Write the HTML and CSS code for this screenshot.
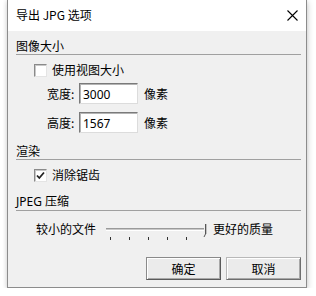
FILE: index.html
```html
<!DOCTYPE html>
<html lang="zh-CN">
<head>
  <meta charset="UTF-8">
  <title>导出 JPG 选项</title>
  <link rel="stylesheet" href="styles.css">
</head>
<body>
  <div class="window">
    <!-- Title bar -->
    <div class="titlebar">
      <span class="title">导出 JPG 选项</span>
      <svg class="close" width="11" height="11" viewBox="0 0 11 11">
        <path d="M0.5 0.5 L10.5 10.5 M10.5 0.5 L0.5 10.5" stroke="#000" stroke-width="1.1" fill="none"/>
      </svg>
    </div>

    <div class="content">
      <!-- Image size -->
      <div class="group-title first">图像大小</div>
      <div class="check-row">
        <span class="checkbox"></span>
        <span class="check-label">使用视图大小</span>
      </div>
      <div class="field-row">
        <span class="field-label">宽度:</span>
        <input class="field" type="text" value="3000">
        <span class="unit">像素</span>
      </div>
      <div class="field-row second">
        <span class="field-label">高度:</span>
        <input class="field" type="text" value="1567">
        <span class="unit">像素</span>
      </div>

      <!-- Rendering -->
      <div class="group-title render">渲染</div>
      <div class="check-row">
        <span class="checkbox">
          <svg width="11" height="11" viewBox="0 0 11 11">
            <path d="M2 5.5 L4.3 8 L9 2.5" stroke="#222" stroke-width="1.8" fill="none"/>
          </svg>
        </span>
        <span class="check-label">消除锯齿</span>
      </div>

      <!-- JPEG compression -->
      <div class="group-title jpeg">JPEG 压缩</div>
      <div class="slider-row">
        <span class="slider-label">较小的文件</span>
        <svg class="slider" width="108" height="22" viewBox="0 0 108 22">
          <line x1="2" y1="9.5" x2="100" y2="9.5" stroke="#9a9a9a" stroke-width="1"/>
          <line x1="2" y1="10.5" x2="100" y2="10.5" stroke="#c8c8c8" stroke-width="1"/>
          <line x1="2" y1="11.5" x2="100" y2="11.5" stroke="#ffffff" stroke-width="1"/>
          <path d="M101.5 5 L101.5 15 L100 18" stroke="#555" stroke-width="1" fill="none"/>
          <path d="M102.5 5 L102.5 15" stroke="#c0c0c0" stroke-width="1" fill="none"/>
          <g stroke="#333" stroke-width="1">
            <line x1="6.5" y1="18" x2="6.5" y2="21"/>
            <line x1="25.5" y1="18" x2="25.5" y2="21"/>
            <line x1="44.5" y1="18" x2="44.5" y2="21"/>
            <line x1="63.5" y1="18" x2="63.5" y2="21"/>
            <line x1="82.5" y1="18" x2="82.5" y2="21"/>
          </g>
        </svg>
        <span class="slider-label">更好的质量</span>
      </div>

      <!-- Buttons -->
      <div class="buttons">
        <button class="btn default">确定</button>
        <button class="btn">取消</button>
      </div>
    </div>
  </div>
</body>
</html>
```

FILE: styles.css
```css
body {
  margin: 0;
  padding: 0;
  background: #ffffff;
  font-family: "Noto Sans CJK SC", "Noto Sans", sans-serif;
  font-size: 12px;
  color: #000;
}

.window {
  margin-left: 7px;
  width: 298px;
  border: 1px solid #8c8c8c;
  border-top: none;
  background: #f0f0f0;
  box-shadow: 1px 2px 6px rgba(0, 0, 0, 0.18), -1px 0 4px rgba(0, 0, 0, 0.08);
}

.titlebar {
  height: 31px;
  background: #ffffff;
  display: flex;
  align-items: center;
  justify-content: space-between;
  padding: 0 8px 0 8px;
}

.title {
  line-height: 16px;
  margin-top: -1px;
}

.close {
  display: block;
  margin-right: 0;
}

.content {
  padding: 7px 5px 7px 8px;
}

.group-title {
  line-height: 16px;
  height: 16px;
  border-bottom: 1px solid #a0a0a0;
}

.group-title.render {
  margin-top: 10px;
}

.group-title.jpeg {
  margin-top: 9px;
  font-family: "Segoe UI", "Noto Sans", "Noto Sans CJK SC", sans-serif;
}

.check-row {
  display: flex;
  align-items: center;
  height: 20px;
  margin-top: 5px;
  padding-left: 18px;
}

.checkbox {
  width: 11px;
  height: 11px;
  background: #fff;
  border: 1px solid;
  border-color: #8a8a8a #e4e4e4 #e4e4e4 #8a8a8a;
  box-shadow: inset 1px 1px 0 #c8c8c8;
  display: flex;
  align-items: center;
  justify-content: center;
}

.checkbox svg {
  display: block;
}

.check-label {
  margin-left: 5px;
  line-height: 16px;
}

.field-row {
  display: flex;
  align-items: center;
  height: 21px;
  margin-top: 3px;
  padding-left: 31px;
}

.field-row.second {
  margin-top: 8px;
}

.field-label {
  width: 32px;
  line-height: 16px;
}

.field {
  box-sizing: border-box;
  width: 59px;
  height: 21px;
  margin: 0;
  padding: 1px 0 0 3px;
  font-family: "Segoe UI", "Noto Sans", sans-serif;
  font-size: 12px;
  color: #000;
  background: #fff;
  border: 1px solid;
  border-color: #7a7a7a #dcdcdc #dcdcdc #7a7a7a;
  box-shadow: inset 1px 1px 0 #b4b4b4;
  outline: none;
}

.unit {
  margin-left: 6px;
  line-height: 16px;
}

.slider-row {
  display: flex;
  align-items: flex-start;
  height: 20px;
  margin-top: 8px;
  padding-left: 20px;
}

.slider-label {
  line-height: 20px;
}

.slider {
  display: block;
  margin-left: 8px;
  margin-right: 1px;
}

.buttons {
  display: flex;
  justify-content: flex-end;
  gap: 5px;
  margin-top: 18px;
  padding-right: 0;
}

.btn {
  width: 75px;
  height: 23px;
  margin: 0;
  padding: 0;
  font-family: "Noto Sans CJK SC", sans-serif;
  font-size: 12px;
  color: #000;
  background: #ebebeb;
  border: 1px solid;
  border-color: #b8b8b8 #6e6e6e #6e6e6e #b8b8b8;
  box-shadow: inset 1px 1px 0 #ffffff, inset -1px -1px 0 #a8a8a8;
}

.btn.default {
  border-color: #8a8a8a #5a5a5a #5a5a5a #8a8a8a;
}
```
